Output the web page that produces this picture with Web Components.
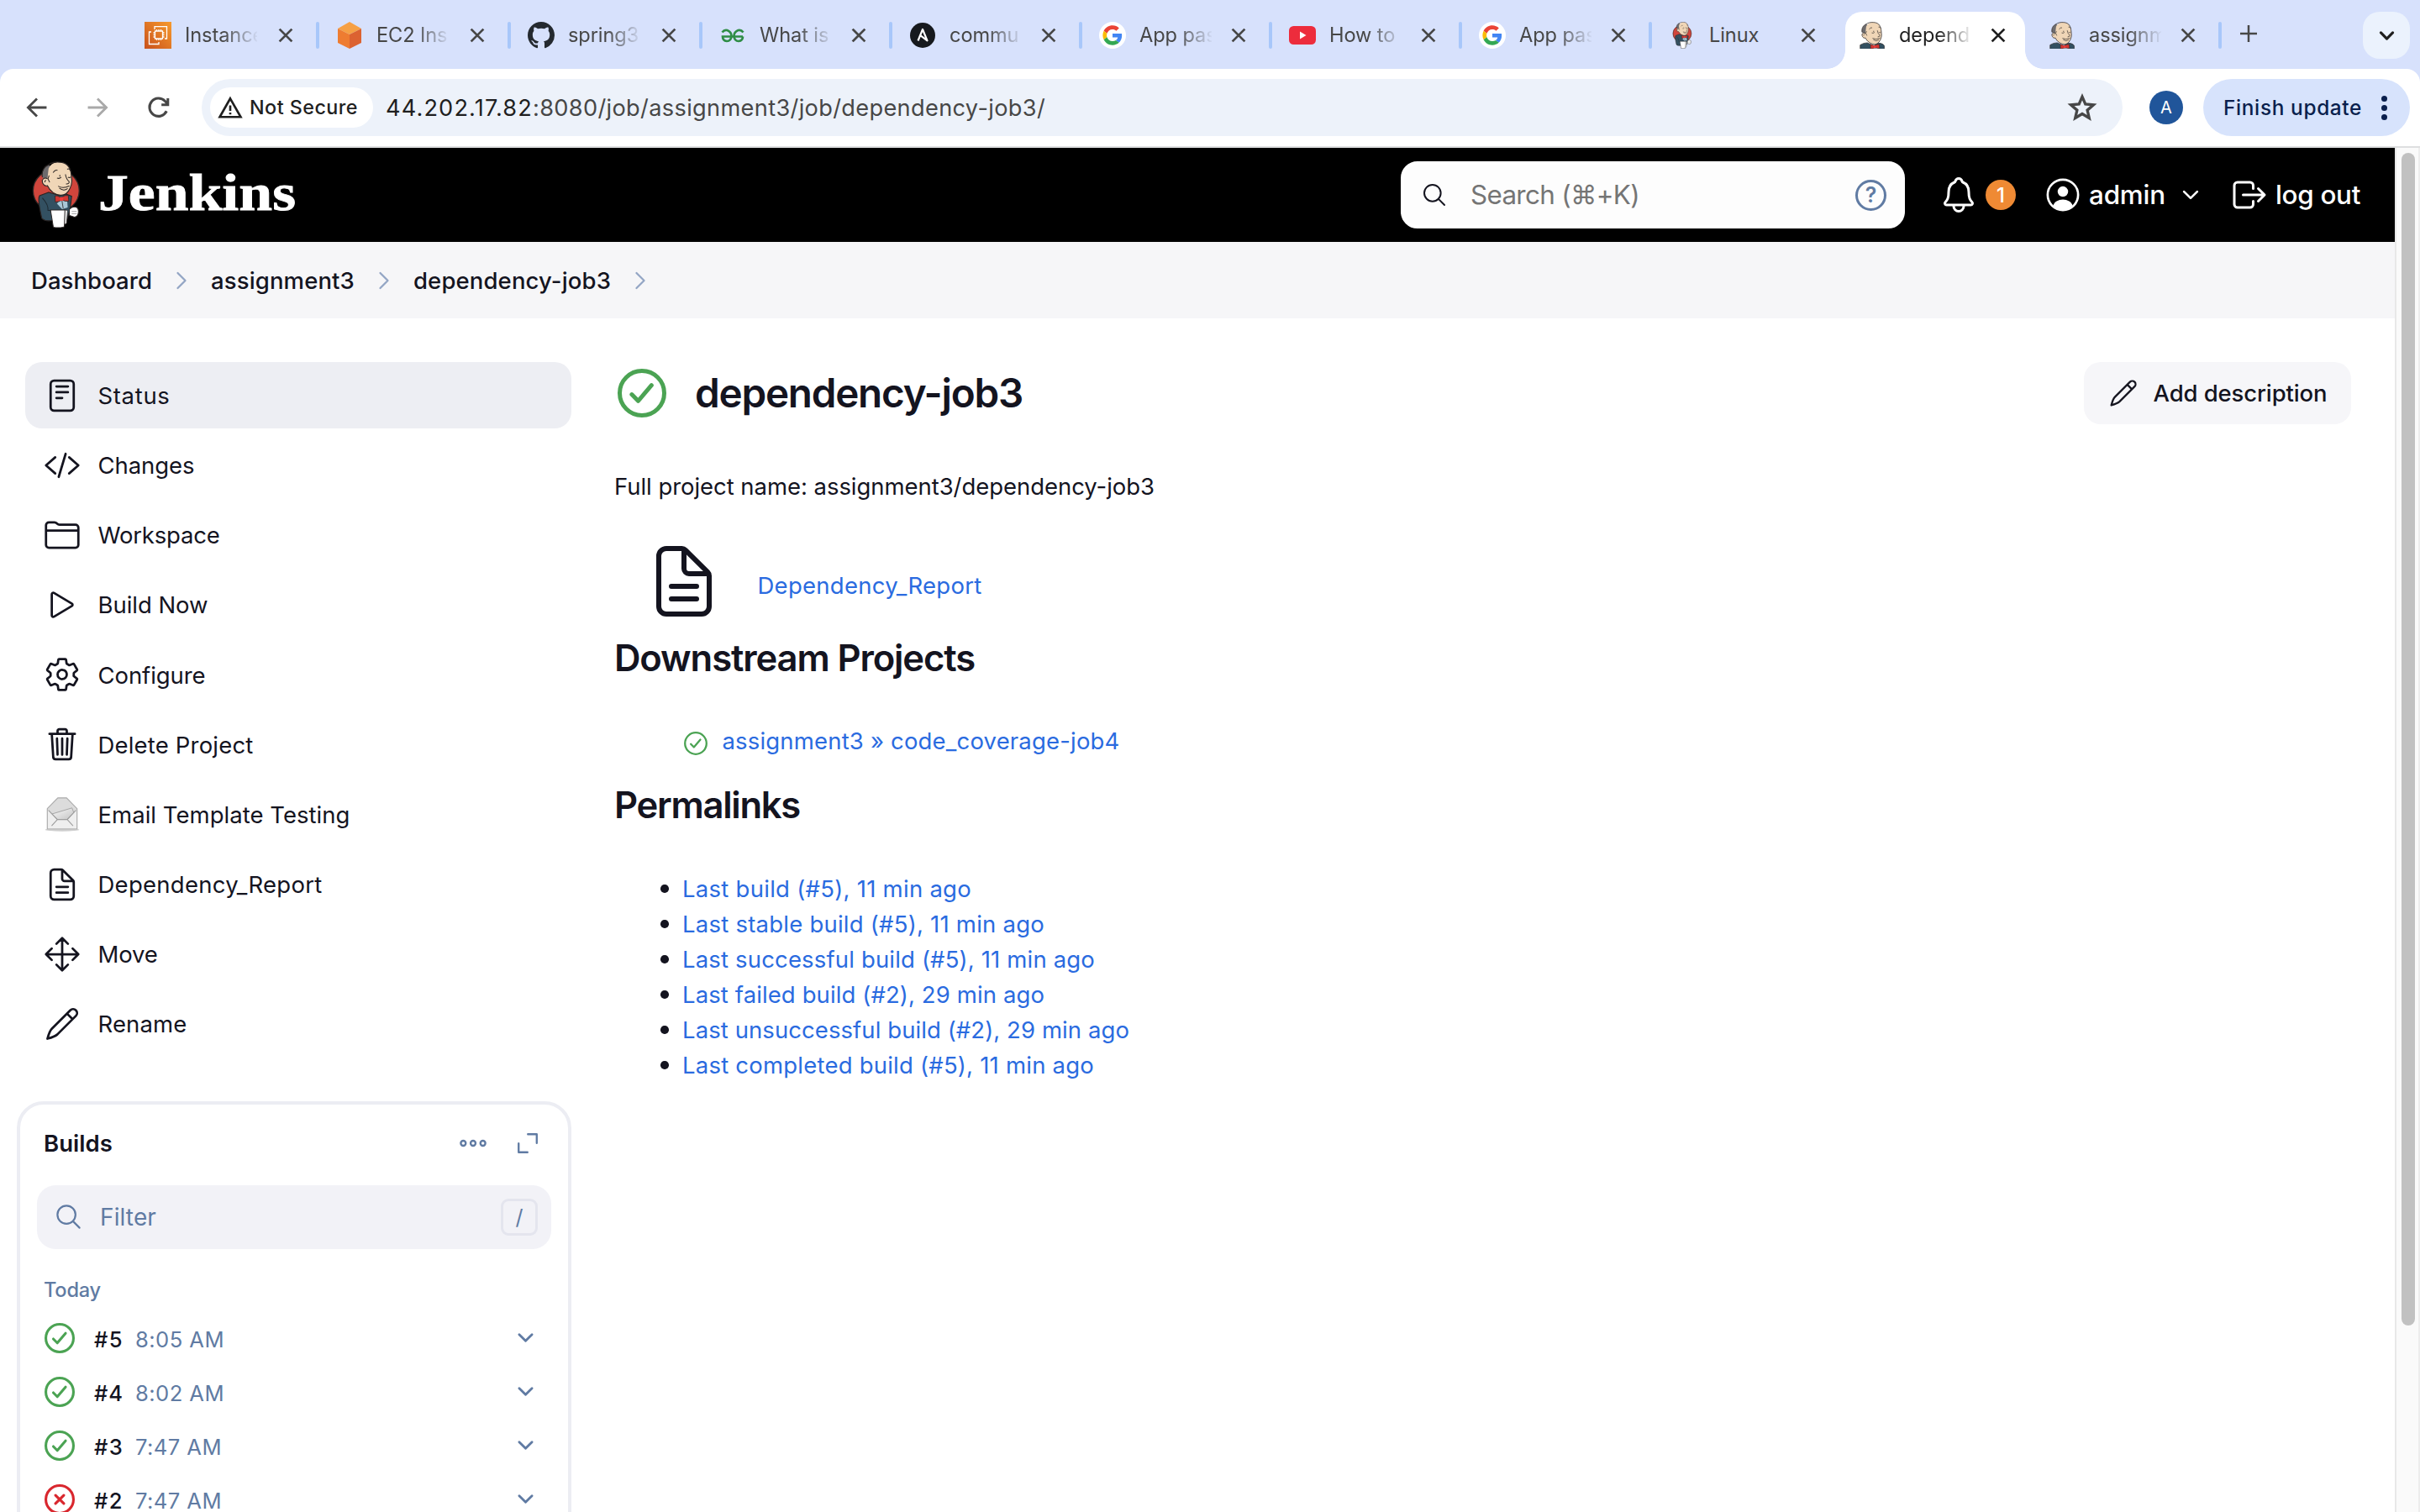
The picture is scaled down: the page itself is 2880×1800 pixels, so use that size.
<!DOCTYPE html>
<html lang="en">
<head>
<meta charset="utf-8">
<title>dependency-job3 [Jenkins]</title>
<style>
html,body{margin:0;padding:0}
body{width:2880px;height:1800px;overflow:hidden;background:#fff;color:#14141f;font-family:Inter,"Liberation Sans",sans-serif;font-size:27.5px;-webkit-font-smoothing:antialiased}
</style>
</head>
<body>
<ci-window></ci-window>
<script>
const define=(name,css,html,setup)=>customElements.define(name,class extends HTMLElement{
  connectedCallback(){
    if(this.shadowRoot)return;
    const root=this.attachShadow({mode:"open"});
    const body=typeof html==="function"?html(this):html;
    root.innerHTML=`<style>:host{box-sizing:border-box}*{box-sizing:border-box}${css}</style>${body}`;
    if(setup)setup(this,root);
  }
});

/* Text set to an exact advance width by adjusting its tracking. */
define("fit-text",`:host{display:block;white-space:nowrap;flex:none}span{display:inline-block}`,`<span><slot></slot></span>`,(el,root)=>{
  const w=parseFloat(el.getAttribute("w"));
  if(!w)return;
  const span=root.querySelector("span");
  const n=el.textContent.length;
  span.style.letterSpacing="0px";
  const natural=span.getBoundingClientRect().width;
  span.style.letterSpacing=((w-natural)/n).toFixed(3)+"px";
  el.style.width=w+"px";
});

const MASCOT_HEAD=`
<path d="M62 92C58 72 70 54 84 48L96 56L84 92L76 104Z" fill="#6d6b6d"/>
<path d="M84 62C92 44 108 38 124 39C146 40 160 52 164 78L166 98C168 112 164 124 160 132C152 150 138 157 126 156C108 154 90 142 80 122C70 126 60 114 62 102C64 94 74 94 80 98Z" fill="#f0d6b7"/>
<path d="M62 92C58 72 68 54 84 48C92 42 108 37 124 39C146 40 160 52 164 78L166 98C168 112 164 124 160 132C152 150 138 157 126 156C108 154 90 142 80 122C70 126 60 114 62 102" fill="none" stroke="#2b2524" stroke-width="3.4"/>
<path d="M80 98C74 94 64 94 62 104M86 86L82 98L88 110M70 110L74 102" fill="none" stroke="#2b2524" stroke-width="3"/>
<path d="M100 76Q108 64 116 68M150 64Q158 60 162 70M114 95Q122 99 129 92M124 84V90M153 92Q158 96 163 91M144 82Q146 98 157 108Q158 117 146 116M118 124Q136 134 158 123M122 131Q138 144 152 132" fill="none" stroke="#2b2524" stroke-width="3"/>`;
const MASCOT_BOW=`<path d="M114 186L126 170L150 174L152 200L132 206Z" fill="#a9c8d8"/>
<path d="M131 172L136 203" stroke="#2b2524" stroke-width="2.4"/>
<path d="M107 158Q116 156 128 165Q142 154 154 157L156 177Q144 180 132 173Q118 182 108 180Z" fill="#d33833" stroke="#2b2524" stroke-width="2.4"/>
<path d="M124 163H136V176H124Z" fill="#ef3d3a"/>`;

const S=(d)=>`<path d="${d}" fill="none" stroke="currentColor" stroke-linecap="round" stroke-linejoin="round"/>`;
const ICONS={
  reader:`<rect x="96" y="48" width="320" height="416" rx="48" fill="none" stroke="currentColor"/>`+S("M176 128h160M176 208h160M176 288h80"),
  code:S("M160 368L32 256l128-112M352 368l128-112-128-112M304 96l-96 320"),
  folder:S("M440 432H72a40 40 0 01-40-40V120a40 40 0 0140-40h75.89a40 40 0 0122.19 6.72l27.84 18.56a40 40 0 0022.19 6.72H440a40 40 0 0140 40v240a40 40 0 01-40 40zM32 192h448"),
  play:S("M112 111v290c0 17.44 17 28.52 31 20.16l247.9-148.37c12.12-7.25 12.12-26.33 0-33.58L143 90.84c-14-8.36-31 2.72-31 20.16z"),
  settings:S("M262.29 192.31a64 64 0 1057.4 57.4 64.13 64.13 0 00-57.4-57.4zM416.39 256a154.34 154.34 0 01-1.53 20.79l45.21 35.46a10.81 10.81 0 012.45 13.75l-42.77 74a10.81 10.81 0 01-13.14 4.59l-44.9-18.08a16.11 16.11 0 00-15.17 1.75A164.48 164.48 0 01325 400.8a15.94 15.94 0 00-8.82 12.14l-6.73 47.89a11.08 11.08 0 01-10.68 9.17h-85.54a11.11 11.11 0 01-10.69-8.87l-6.72-47.82a16.07 16.07 0 00-9-12.22 155.3 155.3 0 01-21.46-12.57 16 16 0 00-15.11-1.71l-44.89 18.07a10.81 10.81 0 01-13.14-4.58l-42.77-74a10.8 10.8 0 012.45-13.75l38.21-30a16.05 16.05 0 006-14.08c-.36-4.17-.58-8.33-.58-12.5s.21-8.27.58-12.35a16 16 0 00-6.07-13.94l-38.19-30A10.81 10.81 0 0149.48 186l42.77-74a10.81 10.81 0 0113.14-4.59l44.9 18.08a16.11 16.11 0 0015.17-1.75A164.48 164.48 0 01187 111.2a15.94 15.94 0 008.82-12.14l6.73-47.89A11.08 11.08 0 01213.23 42h85.54a11.11 11.11 0 0110.69 8.87l6.72 47.82a16.07 16.07 0 009 12.22 155.3 155.3 0 0121.46 12.57 16 16 0 0015.11 1.71l44.89-18.07a10.81 10.81 0 0113.14 4.58l42.77 74a10.8 10.8 0 01-2.45 13.75l-38.21 30a16.05 16.05 0 00-6.05 14.08c.33 4.14.55 8.3.55 12.47z"),
  trash:S("M112 112l20 320c.95 18.49 14.4 32 32 32h184c18.67 0 31.55-13.51 32-32l20-320M80 112h352M192 112V72a23.93 23.93 0 0124-24h80a23.93 23.93 0 0124 24v40M256 176v224M184 176l8 224M328 176l-8 224"),
  document:S("M416 221.25V416a48 48 0 01-48 48H144a48 48 0 01-48-48V96a48 48 0 0148-48h98.75a32 32 0 0122.62 9.37l141.26 141.26a32 32 0 019.37 22.62zM256 56v120a32 32 0 0032 32h120M176 288h160M176 368h160"),
  move:S("M176 112l80-80 80 80M256 32v448M176 400l80 80 80-80M400 176l80 80-80 80M112 176l-80 80 80 80M32 256h448"),
  pencil:S("M368 66A55 55 0 01446 144L190 400C160 428 126 440 52 460C72 386 84 350 112 322ZM322 112l78 78"),
  search:S("M221.09 64a157.09 157.09 0 10157.09 157.09A157.1 157.1 0 00221.09 64zM338.29 338.29L448 448"),
  bell:S("M427.68 351.43C402 320 383.87 304 383.87 217.35 383.87 138 343.35 109.73 310 96c-4.43-1.82-8.6-6-9.95-10.55C294.2 65.54 277.8 48 256 48s-38.21 17.55-44 37.47c-1.35 4.6-5.52 8.71-9.95 10.53-33.39 13.75-73.87 41.92-73.87 121.35C128.13 304 110 320 84.32 351.43 73.68 364.45 83 384 101.61 384h308.88c18.51 0 27.77-19.61 17.19-32.57zM320 384v16a64 64 0 01-128 0v-16"),
  logout:S("M304 336v40a40 40 0 01-40 40H104a40 40 0 01-40-40V136a40 40 0 0140-40h160a40 40 0 0140 40v40M368 336l80-80-80-80M176 256h256"),
  down:S("M112 184l144 144 144-144"),
  forward:S("M184 112l144 144-144 144"),
  user:`<circle cx="256" cy="256" r="232" fill="none" stroke="currentColor"/><circle cx="256" cy="206" r="80" fill="currentColor"/><path d="M106 424C120 362 190 326 256 326S392 362 406 424Q340 486 256 486T106 424Z" fill="currentColor"/>`,
  expand:S("M260 72H440V252M72 260V440H252"),
  dots:`<g fill="none" stroke="currentColor"><circle cx="90" cy="256" r="42"/><circle cx="256" cy="256" r="42"/><circle cx="422" cy="256" r="42"/></g>`,
  check:`<circle cx="256" cy="256" r="234" fill="none" stroke="currentColor"/>`+S("M149 270L216 338L356 174"),
  cross:`<circle cx="256" cy="256" r="234" fill="none" stroke="currentColor"/>`+S("M186 186L326 326M326 186L186 326"),
  close:`<path d="M20 20L492 492M492 20L20 492" stroke="currentColor" fill="none"/>`,
  plus:`<path d="M256 0V512M0 256H512" stroke="currentColor" fill="none"/>`,
  back:`<path d="M500 256H40M256 30L30 256L256 482" stroke="currentColor" fill="none"/>`,
  fwd:`<path d="M12 256H472M256 30L482 256L256 482" stroke="currentColor" fill="none"/>`,
  reload:`<path d="M438 340A210 210 0 11400 104L456 166M468 40V190H318" stroke="currentColor" fill="none"/>`,
  warning:`<path d="M256 60L484 462H28Z" stroke="currentColor" fill="none"/><path d="M256 210V330M256 366V408" stroke="currentColor" fill="none"/>`,
  star:`<path d="M256 62L313 196L458 208L348 303L381 444L256 369L131 444L164 303L54 208L199 196Z" stroke="currentColor" fill="none"/>`,
  mail:`<defs><linearGradient id="a" x1="0" y1="0" x2="1" y2="1"><stop offset="0" stop-color="#fafafa"/><stop offset="1" stop-color="#c4c4c4"/></linearGradient></defs>
    <ellipse cx="256" cy="474" rx="236" ry="22" fill="#cfcfcf"/>
    <path d="M50 182L196 34H316L462 182V462H50Z" fill="#dcdcdc" stroke="#a9a9a9" stroke-width="13"/>
    <path d="M58 200L186 330H326L454 200V456H58Z" fill="#efefef"/><path d="M116 256L392 172L416 236L326 332H190Z" fill="url(#a)" stroke="#9d9d9d" stroke-width="10"/>
    <path d="M66 206L190 334H326L446 206M190 334L110 420M326 334L406 420" stroke="#9d9d9d" stroke-width="13" fill="none"/>`
};
define("ui-icon",`:host{display:block;flex:none}svg{display:block;overflow:visible}`,el=>{
  const s=el.getAttribute("size")||44;
  return `<svg width="${s}" height="${s}" viewBox="0 0 512 512" stroke-width="${el.getAttribute("stroke")||32}">${ICONS[el.getAttribute("name")]}</svg>`;
});

const BRANDS={
  mascot:["25 36 173 238",`<ellipse cx="111" cy="140" rx="82" ry="76" fill="#d0453c" stroke="#2b2524" stroke-width="4"/>
    <path d="M84 146L52 158Q44 170 60 238Q72 250 96 246L150 240L160 208L166 160L146 152L126 158Z" fill="#335061" stroke="#2b2524" stroke-width="3.5"/>
    <path d="M62 166Q84 190 82 210H150" fill="none" stroke="#1d2a33" stroke-width="3"/>
    ${MASCOT_HEAD}${MASCOT_BOW}
    <path d="M158 206Q168 196 178 198Q190 198 190 214Q190 232 176 234L158 228Z" fill="#fff" stroke="#2b2524" stroke-width="3"/><path d="M166 214H184M166 222H184" stroke="#777" stroke-width="2"/>
    <path d="M138 208L152 210L148 256L138 262Z" fill="#e9e9e9" stroke="#2b2524" stroke-width="2"/>
    <path d="M91 209H142L140 268Q120 274 101 270Z" fill="#fff" stroke="#2b2524" stroke-width="3"/>`],
  butler:["50 36 132 144",`<path d="M52 182V160Q70 148 90 148L124 164L150 150Q176 152 181 164V182Z" fill="#335061" stroke="#2b2524" stroke-width="3"/>${MASCOT_HEAD}${MASCOT_BOW}`],
  ec2:["0 0 32 32",`<defs><linearGradient id="g" x1="0" y1="1" x2="1" y2="0"><stop offset="0" stop-color="#c8511b"/><stop offset="1" stop-color="#f79a2d"/></linearGradient></defs><path d="M0 0H32V32H0Z" fill="url(#g)"/>
    <path d="M12 9V5.700H26.500V20H24M8 12H5.500V26.500H17V24" fill="none" stroke="#fff" stroke-width="1.3"/><path d="M12.500 11H21.500V20H12.500ZM14.500 9V10.500M17 9V10.500M19.500 9V10.500M14.500 20.500V22M17 20.500V22M19.500 20.500V22M10.500 13H12M10.500 15.500H12M10.500 18H12M22 13H23.500M22 15.500H23.500M22 18H23.500" fill="none" stroke="#fff" stroke-width="1.3"/>`],
  cube:["0 0 32 32",`<path d="M16 0L30 8L16 15L2 8Z" fill="#f6a044"/><path d="M2 8L16 15V32L2 25Z" fill="#ee7c31"/><path d="M30 8L16 15V32L30 25Z" fill="#dc6231"/>`],
  github:["0 0 16 16",`<path fill="#24292f" d="M8 0C3.580 0 0 3.580 0 8c0 3.540 2.290 6.530 5.470 7.590.4.070.55-.17.55-.38 0-.19-.01-.82-.01-1.490-2.010.37-2.530-.49-2.690-.94-.09-.23-.48-.94-.82-1.130-.28-.15-.68-.52-.01-.53.63-.01 1.080.58 1.230.82.72 1.210 1.870.87 2.330.66.070-.52.28-.87.51-1.070-1.780-.2-3.640-.89-3.640-3.950 0-.87.31-1.590.82-2.150-.08-.2-.36-1.020.08-2.120 0 0 .67-.21 2.200.82.64-.18 1.320-.27 2-.27s1.360.09 2 .27c1.530-1.040 2.200-.82 2.200-.82.44 1.100.16 1.920.08 2.120.51.56.82 1.270.82 2.150 0 3.070-1.870 3.750-3.650 3.950.29.25.54.73.54 1.480 0 1.070-.01 1.930-.01 2.200 0 .21.15.46.55.38A8.010 8.010 0 0016 8c0-4.420-3.580-8-8-8z"/>`],
  geeks:["0 0 32 32",`<g fill="none" stroke="#2f8d46" stroke-width="2.700"><path d="M3.500 12.500Q6 9 9.500 10Q14.500 12 14.500 17Q14 23 9 23Q4 22.500 4 17.500H28"/><path d="M28.500 12.500Q26 9 22.500 10Q17.500 12 17.500 17Q18 23 23 23Q28 22.500 28 17.500"/></g>`],
  ansible:["0 0 32 32",`<circle cx="16" cy="16" r="15" fill="#16191d"/><path d="M10.500 22.500L16 9L21.500 22.300L13 15.800" fill="none" stroke="#fff" stroke-width="2.200" stroke-linejoin="round"/>`],
  google:["-9 -9 66 66",`<circle cx="24" cy="24" r="33" fill="#fff"/><path fill="#EA4335" d="M24 9.500c3.540 0 6.710 1.220 9.210 3.600l6.850-6.850C35.900 2.380 30.470 0 24 0 14.620 0 6.510 5.380 2.560 13.220l7.980 6.190C12.430 13.720 17.740 9.500 24 9.500z"/><path fill="#4285F4" d="M46.980 24.550c0-1.570-.15-3.090-.38-4.550H24v9.020h12.940c-.58 2.960-2.260 5.480-4.780 7.180l7.730 6c4.510-4.180 7.090-10.360 7.090-17.650z"/><path fill="#FBBC05" d="M10.530 28.590c-.48-1.450-.76-2.990-.76-4.590s.27-3.140.76-4.590l-7.980-6.190C.92 16.460 0 20.120 0 24c0 3.880.92 7.540 2.560 10.780l7.970-6.190z"/><path fill="#34A853" d="M24 48c6.480 0 11.930-2.130 15.890-5.810l-7.730-6c-2.150 1.450-4.920 2.300-8.160 2.300-6.260 0-11.570-4.220-13.470-9.910l-7.980 6.190C6.510 42.620 14.620 48 24 48z"/>`],
  youtube:["0 0 32 32",`<rect x="0" y="5" width="32" height="22" rx="5.500" fill="#ed2c3c"/><path d="M13 11.500L20.500 16L13 20.500Z" fill="#fff"/>`]
};
define("brand-mark",`:host{display:flex;flex:none;justify-content:center;align-items:center}svg{display:block}`,el=>{
  const [vb,art]=BRANDS[el.getAttribute("name")];
  return `<svg width="${el.getAttribute("w")||32}" height="${el.getAttribute("h")||32}" viewBox="${vb}">${art}</svg>`;
});

/* ---------- browser frame ---------- */
define("browser-tab",`
:host{display:flex;align-items:flex-start;height:68px;flex:none;color:#474747;font-size:23.6px}
.in{flex:1;display:flex;align-items:center;height:56px;padding-left:22px;min-width:0}
.t{width:86px;margin-left:16px;overflow:hidden;white-space:nowrap;line-height:32px;letter-spacing:-.1px;-webkit-mask-image:linear-gradient(90deg,#000 46px,transparent 88px);mask-image:linear-gradient(90deg,#000 46px,transparent 88px)}
:host([plain]) .t{-webkit-mask-image:none;mask-image:none}
ui-icon{margin-left:26px}
:host([narrow]) ui-icon{margin-left:24px}
.sep{width:4px;height:32px;margin:12px -2px 0 -2px;border-radius:2px;background:#a8c7fa}
:host([nosep]) .sep,:host([active]) .sep{background:none}
:host([active]){color:#1f1f1f}
:host([active]) .in{position:relative;height:68px;margin:0 6px;padding:0 0 12px 16px;background:#fff;border-radius:20px 20px 0 0}
:host([active]) .in::before,:host([active]) .in::after{content:"";position:absolute;bottom:0;width:22px;height:22px}
:host([active]) .in::before{left:-22px;background:radial-gradient(circle at 0 0,transparent 21.500px,#fff 22.200px)}
:host([active]) .in::after{right:-22px;background:radial-gradient(circle at 100% 0,transparent 21.500px,#fff 22.200px)}
`,el=>`<div class="in"><brand-mark name="${el.getAttribute("mark")}" style="width:32px" ${el.getAttribute("mark")==="mascot"?'w="24"':""}></brand-mark><div class="t"><slot></slot></div><ui-icon name="close" size="16" stroke="90"></ui-icon></div><div class="sep"></div>`);

define("tab-strip",`
:host{display:flex;height:82px;padding:14px 12px 0 150px;background:#d7e1fc}
.plus{margin:16px 0 0 23.500px;color:#474747}
.more{margin-left:auto;width:56px;height:56px;border-radius:20px;background:#ebf2fd;display:flex;align-items:center;justify-content:center;color:#1f1f1f}
`,()=>{
  const tabs=[["ec2","Instance",228],["cube","EC2 Ins",228],["github","spring3",228],["geeks","What is",226,"narrow"],["ansible","commu",226,"narrow"],["google","App pas",226,"narrow"],["youtube","How to",226,"narrow"],["google","App pas",226,"narrow"],["mascot","Linux",226,"plain nosep narrow"],["butler","depend",226,"active narrow"],["butler","assignm",226,"narrow"]];
  return tabs.map(([m,t,w,a])=>`<browser-tab mark="${m}" style="width:${w}px" ${a||""}>${t}</browser-tab>`).join("")
  +`<ui-icon class="plus" name="plus" size="20" stroke="64"></ui-icon><div class="more"><ui-icon name="down" size="25" stroke="66"></ui-icon></div>`;
});

define("browser-toolbar",`
:host{display:block;background:#d7e1fc}
.bar{display:flex;align-items:center;height:94px;background:#fff;border-bottom:2px solid #dedfe0;border-radius:16px 16px 0 0;padding:0 12px 0 32px;color:#474747}
.omni{display:flex;align-items:center;width:2286px;height:68px;margin-left:40px;padding:0 32px 0 10px;border-radius:34px;background:#edf2fa}
.chip{display:flex;align-items:center;width:194px;height:48px;padding-left:10px;border-radius:24px;background:#fff;color:#1f1f1f;font-size:23.300px;font-weight:500}
.url{display:flex;margin-left:15px;font-size:27.200px}
.host{color:#1f1f1f}
.av{display:flex;align-items:center;justify-content:center;width:40px;height:40px;margin-left:32px;border-radius:50%;background:#20559a;color:#fff;font-size:20px}
.upd{display:flex;align-items:center;width:246px;height:68px;margin-left:24px;padding-left:24px;border-radius:34px;background:#d7e3fc;color:#0a1f4d;font-size:24.400px;font-weight:500}
.kebab{display:grid;gap:4px;margin-left:23px}
.kebab i{width:7px;height:7px;border-radius:50%;background:#0a1f4d}
`,`<div class="bar">
<ui-icon name="back" size="24" stroke="60"></ui-icon>
<ui-icon name="fwd" size="24" stroke="60" style="margin-left:48px;color:#a9a9a9"></ui-icon>
<ui-icon name="reload" size="26" stroke="60" style="margin:0 -2px 0 48px"></ui-icon>
<div class="omni">
<div class="chip"><ui-icon name="warning" size="28" stroke="48"></ui-icon><fit-text w="129" style="margin:-1px 0 0 9px">Not Secure</fit-text></div>
<div class="url"><fit-text class="host" w="175">44.202.17.82</fit-text><fit-text w="610">:8080/job/assignment3/job/dependency-job3/</fit-text></div>
<ui-icon name="star" size="34" stroke="50" style="margin-left:auto;margin-right:-1px"></ui-icon>
</div>
<div class="av">A</div>
<div class="upd"><fit-text w="165">Finish update</fit-text><div class="kebab"><i></i><i></i><i></i></div></div>
</div>`);

/* ---------- Jenkins chrome ---------- */
define("app-header",`
:host{display:flex;align-items:center;height:112px;padding-left:38px;background:#000;color:#fff;font-size:31.400px;font-weight:500}
.word{width:236px;height:70px;margin:-4px 0 0 21px;font:bold 61px/70px "Liberation Serif",serif;-webkit-text-stroke:.8px #fff}
.word span{display:inline-block;transform:scaleX(1.175);transform-origin:0 50%}
.search{display:flex;align-items:center;width:600px;height:80px;margin-left:1314px;padding:0 22px 0 20px;border:4px solid #fff;border-radius:20px;background:#fdfdfd;color:#14141f;font-weight:400}
.help{display:flex;align-items:center;justify-content:center;width:37px;height:37px;margin-left:auto;border:3px solid #607ba3;border-radius:50%;color:#607ba3;font-size:25px;font-weight:600;margin-right:-4px}
.badge{display:flex;align-items:center;justify-content:center;width:36px;height:36px;margin-left:8px;border-radius:50%;background:#ef8a34;font-size:24px}
`,`<brand-mark name="mascot" w="58" h="80"></brand-mark>
<div class="word"><span>Jenkins</span></div>
<div class="search"><ui-icon name="search" size="32"></ui-icon><fit-text w="201" style="margin-left:27px;color:#757575">Search (⌘+K)</fit-text><div class="help">?</div></div>
<ui-icon name="bell" size="48" style="margin-left:40px"></ui-icon><div class="badge">1</div>
<ui-icon name="user" size="40" stroke="34" style="margin-left:36px"></ui-icon><fit-text w="91" style="margin-left:11px">admin</fit-text>
<ui-icon name="down" size="28" stroke="48" style="margin-left:16px"></ui-icon>
<ui-icon name="logout" size="48" style="margin-left:32px"></ui-icon><fit-text w="101" style="margin-left:7px">log out</fit-text>`);

define("crumb-bar",`
:host{display:flex;align-items:center;height:91px;padding:1px 0 0 37px;background:#f6f6f8;font-weight:490}
ui-icon{color:#93a5c4;margin:0 20px}
`,`<fit-text w="144">Dashboard</fit-text><ui-icon name="forward" size="32" stroke="36" style="margin-left:19px;margin-right:19px"></ui-icon>
<fit-text w="171">assignment3</fit-text><ui-icon name="forward" size="32" stroke="36" style="margin-left:19px;margin-right:19px"></ui-icon>
<fit-text w="235">dependency-job3</fit-text><ui-icon name="forward" size="32" stroke="36" style="margin-left:19px"></ui-icon>`);

define("side-item",`
:host{display:flex;align-items:center;height:79.150px;margin-left:10px;padding-left:22px;border-radius:20px;font-weight:440}
:host([active]){background:#edeef3}
fit-text{margin:1px 0 0 20.500px}
`,el=>`<ui-icon name="${el.getAttribute("icon")}"></ui-icon><fit-text w="${el.getAttribute("w")-1}">${el.getAttribute("label")}</fit-text>`);

define("build-row",`
:host{display:flex;align-items:center;height:64px;padding:0 14px 0 30px;font-size:25.600px}
.c{color:#4ba353}.c.f{color:#d9272e}
.n{margin:3px 0 0 23px;font-weight:490}.t{margin:3px 0 0 14px;color:#607ba3}
.d{margin-left:auto;margin-right:23px;color:#607ba3}
`,el=>{const bad=el.hasAttribute("failed");return `<ui-icon class="c ${bad?"f":""}" name="${bad?"cross":"check"}" size="36" stroke="44"></ui-icon><fit-text class="n" w="35">${el.getAttribute("n")}</fit-text><fit-text class="t" w="${el.getAttribute("w")}">${el.getAttribute("time")}</fit-text><ui-icon class="d" name="down" size="27" stroke="54"></ui-icon>`});

define("builds-card",`
:host{display:block;height:520px;margin-top:52.500px;border:4px solid #ecedf3;border-radius:32px}
.head{display:flex;align-items:center;height:96px;padding:0 0 3px 28px;color:#607ba3}
.head fit-text{color:#14141f;font-weight:600}
.filter{display:flex;align-items:center;height:76px;margin:0 20px;padding:0 16px 0 20px;border-radius:22px;background:#f2f2f7;color:#607ba3;font-size:28px}
.kbd{display:flex;align-items:center;justify-content:center;width:44px;height:44px;margin-left:auto;border:3px solid #e4e5ee;border-radius:9px;font-size:25px}
.day{margin:32px 0 8px 28px;line-height:34px;color:#607ba3;font-size:23.600px;font-weight:480}
.rows{margin-left:-1px}
`,`<div class="head"><fit-text w="82">Builds</fit-text><ui-icon name="dots" size="36" stroke="34" style="margin-left:411px"></ui-icon><ui-icon name="expand" size="30" stroke="40" style="margin-left:32px"></ui-icon></div>
<div class="filter"><ui-icon name="search" size="35"></ui-icon><fit-text w="67" style="margin:1px 0 0 20px">Filter</fit-text><div class="kbd">/</div></div>
<div class="day"><fit-text w="68">Today</fit-text></div>
<div class="rows"><build-row n="#5" time="8:05 AM" w="106"></build-row><build-row n="#4" time="8:02 AM" w="106"></build-row><build-row n="#3" time="7:47 AM" w="103"></build-row><build-row n="#2" time="7:47 AM" w="103" failed></build-row></div>`);

define("side-panel",`
:host{display:block;width:680px;padding:52px 0 0 20px;flex:none}
nav{display:grid;gap:4px}
`,()=>`<nav>${[["reader","Status",87],["code","Changes",116],["folder","Workspace",146],["play","Build Now",132],["settings","Configure",129],["trash","Delete Project",186],["mail","Email Template Testing",301],["document","Dependency_Report",268],["move","Move",72],["pencil","Rename",107]].map(([i,l,w],k)=>`<side-item icon="${i}" label="${l}" w="${w}" ${k?"":"active"}></side-item>`).join("")}</nav><builds-card></builds-card>`);

define("job-page",`
:host{display:block;flex:1;padding:52px 52px 0 52px}
.top{display:flex;align-items:center;height:74px;padding-left:3px}
.ok{color:#4ba353}
h1,h2,p,ul{margin:0;padding:0}
h1{font-size:47.600px;line-height:60px;font-weight:620;margin:-1px 0 0 34px}
.btn{display:flex;align-items:center;width:318px;height:74px;margin-left:auto;padding-left:29px;border-radius:20px;background:#f6f6f9;font-weight:470}
p{margin-top:53px;line-height:42px;margin-left:-1px}
a{color:#2a6be0;font-weight:440}
.rep{display:flex;align-items:center;height:96px;margin:44px 0 0 34px}
h2{font-size:43.600px;line-height:50px;font-weight:620;margin:19px 0 0 -1px}
.down{display:flex;align-items:center;height:42px;margin:52px 0 0 82px}
.down ui-icon{margin-top:6px}
ul{margin:53px 0 0 54px;list-style:none}
li{display:flex;align-items:center;height:42px;line-height:42px}
li i{width:9.500px;height:9.500px;margin-right:16.500px;border-radius:50%;background:#14141f}
`,()=>`<div class="top"><ui-icon class="ok" name="check" size="58" stroke="44"></ui-icon><h1><fit-text w="390">dependency-job3</fit-text></h1><div class="btn"><ui-icon name="pencil" size="36"></ui-icon><fit-text w="207" style="margin-left:17.500px">Add description</fit-text></div></div>
<p><fit-text w="643">Full project name: assignment3/dependency-job3</fit-text></p>
<div class="rep"><ui-icon name="document" size="96"></ui-icon><a style="margin:10px 0 0 39.500px"><fit-text w="267">Dependency_Report</fit-text></a></div>
<h2><fit-text w="429">Downstream Projects</fit-text></h2>
<div class="down"><ui-icon class="ok" name="check" size="28" stroke="42"></ui-icon><a style="margin-left:17.500px"><fit-text w="473">assignment3 » code_coverage-job4</fit-text></a></div>
<h2 style="margin-top:31px"><fit-text w="221">Permalinks</fit-text></h2>
<ul>${[["Last build (#5), 11 min ago",344],["Last stable build (#5), 11 min ago",431],["Last successful build (#5), 11 min ago",491],["Last failed build (#2), 29 min ago",431],["Last unsuccessful build (#2), 29 min ago",532],["Last completed build (#5), 11 min ago",490]].map(([t,w])=>`<li><i></i><a><fit-text w="${w}">${t}</fit-text></a></li>`).join("")}</ul>`);

define("scroll-track",`
:host{display:block;width:30px;height:1624px;padding:6px 0 0 6px;background:#fafafa;border-left:2px solid #e8e8e8;border-right:2px solid #ededed}
div{width:16px;height:1396px;border-radius:8px;background:#c1c1c1}
`,`<div></div>`);

define("ci-window",`
:host{display:block;width:2880px;height:1800px;overflow:hidden;background:#fff}
.view{display:flex;height:1624px}
.page{width:2850px;overflow:hidden}
.cols{display:flex;height:1421px}
`,`<tab-strip></tab-strip><browser-toolbar></browser-toolbar>
<div class="view"><div class="page"><app-header></app-header><crumb-bar></crumb-bar><div class="cols"><side-panel></side-panel><job-page></job-page></div></div><scroll-track></scroll-track></div>`);
</script>
</body>
</html>
